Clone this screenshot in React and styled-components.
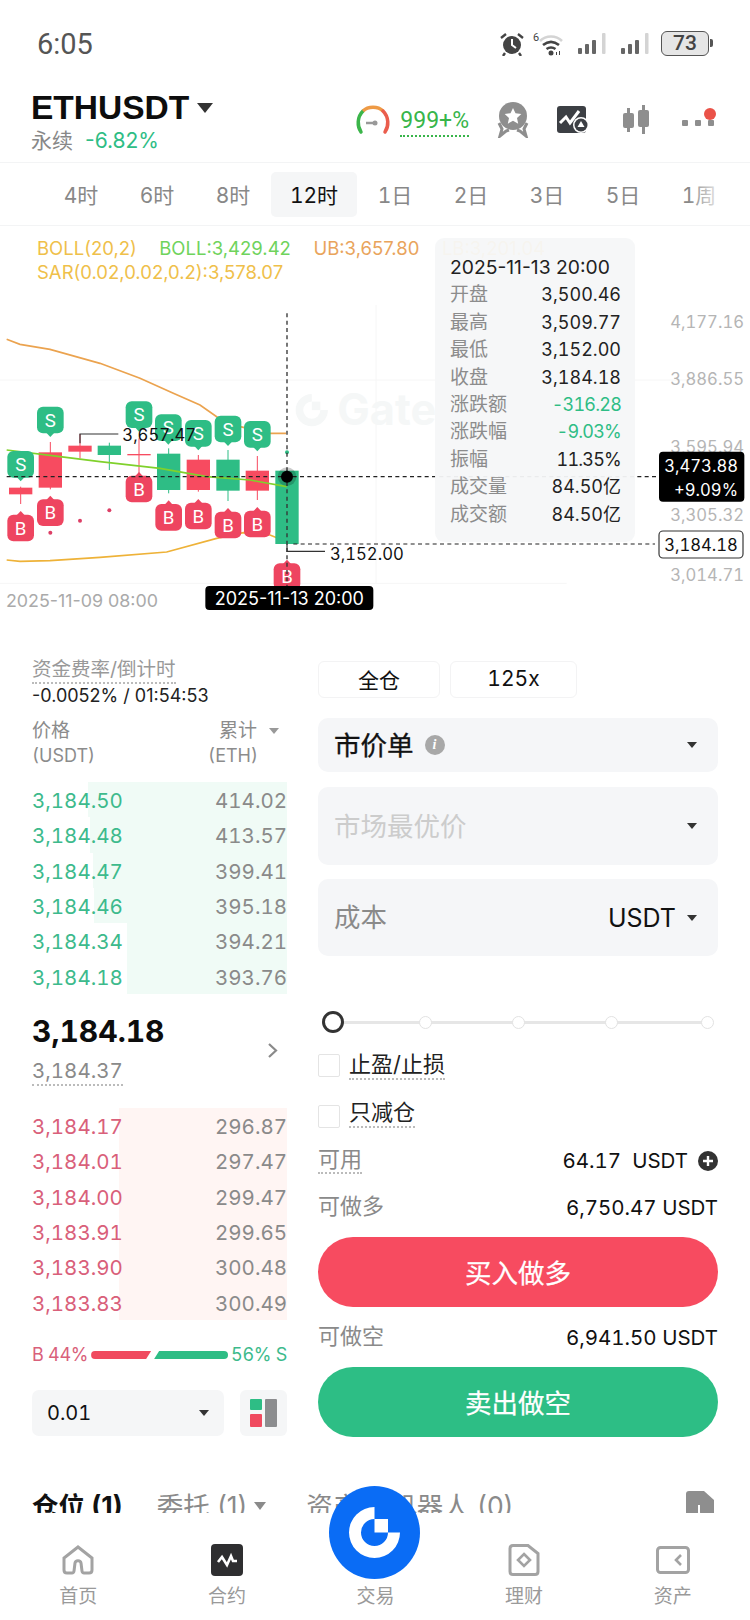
import React from "react";
import styled, { createGlobalStyle } from "styled-components";

const Global = createGlobalStyle`
  html, body { margin: 0; padding: 0; background: #fff; }
  body {
    font-family: Inter, "Noto Sans CJK SC", sans-serif;
    font-variant-numeric: tabular-nums;
    color: #111;
  }
  * { box-sizing: border-box; }
`;

const Page = styled.div`
  position: relative;
  width: 750px;
  height: 1620px;
  overflow: hidden;
  background: #fff;
`;

/* status bar */
const StatusBar = styled.div`
  height: 88px;
  padding: 26px 38px 0 37px;
  display: flex;
  justify-content: space-between;
  align-items: flex-start;
`;
const Clock = styled.div`
  font: 400 29px/36px Roboto, sans-serif;
  color: #555;
`;
const StatusIcons = styled.div`
  display: flex;
  align-items: center;
  margin-top: 5px;
`;
const Battery = styled.div`
  position: relative;
  width: 48px;
  height: 25px;
  margin: 0 3px 0 11px;
  border: 1.5px solid #555;
  border-radius: 6px;
  background: #e6e6e6;
  font: 500 21px/22px Roboto, sans-serif;
  color: #444;
  text-align: center;
  &::after {
    content: "";
    position: absolute;
    right: -5px;
    top: 7px;
    width: 3px;
    height: 8px;
    border-radius: 0 2px 2px 0;
    background: #555;
  }
`;

/* header */
const Header = styled.div`
  height: 75px;
  padding: 0 34px 0 31px;
  display: flex;
  justify-content: space-between;
  border-bottom: 1px solid #f3f4f5;
`;
const Symbol = styled.div`
  display: flex;
  flex-direction: column;
`;
const SymbolName = styled.div`
  display: flex;
  align-items: center;
  font: 700 33.5px/38px "Liberation Sans", sans-serif;
  color: #0d0d0d;
  margin-top: 1px;
`;
const Sub = styled.div`
  font-size: 21px;
  line-height: 28px;
  font-variant-numeric: normal;
  color: #888;
  span { color: #2ebd85; margin-left: 12px; }
`;
const Tools = styled.div`
  display: flex;
  align-items: center;
  height: 75px;
  padding-bottom: 12px;
`;
const Rate = styled.div`
  font: 400 23px/26px Roboto, sans-serif;
  color: #38b54a;
  margin: 6px 27px 0 10px;
  border-bottom: 2px dotted #38b54a;
  padding-bottom: 1px;
`;

/* interval tabs */
const Tabs = styled.div`
  position: relative;
  height: 63px;
  padding-left: 43px;
  display: flex;
  align-items: center;
  border-bottom: 1px solid #f3f4f5;
  &::after {
    content: "";
    position: absolute;
    right: 0;
    top: 0;
    bottom: 0;
    width: 62px;
    background: linear-gradient(to right, rgba(255,255,255,0), #fff 62%);
  }
`;
const Tab = styled.div`
  width: ${p => (p.$active ? 86 : 76)}px;
  height: 45px;
  flex: none;
  display: flex;
  align-items: center;
  justify-content: center;
  font-size: 21px;
  border-radius: 5px;
  color: ${p => (p.$active ? "#111" : "#888")};
  background: ${p => (p.$active ? "#f5f6f7" : "transparent")};
`;

/* chart */
const Chart = styled.div`
  position: relative;
  height: 399px;
`;
const ChartCanvas = styled.svg`
  display: block;
  width: 750px;
  height: 399px;
  font-family: Inter, sans-serif;
`;
const DateText = styled.text`
  font-variant-numeric: normal;
`;
const Legend = styled.div`
  position: absolute;
  left: 37px;
  top: 10px;
  font-size: 18.5px;
  line-height: 24px;
  font-variant-numeric: normal;
`;
const LegendRow = styled.div`
  display: flex;
  gap: 22.5px;
  white-space: nowrap;
`;
const LegendItem = styled.span`
  color: ${p => p.$color};
`;
const Tooltip = styled.div`
  position: absolute;
  left: 435px;
  top: 12px;
  width: 200px;
  height: 304px;
  padding: 16px 14px 0 15px;
  background: rgba(245, 247, 248, 0.95);
  border-radius: 9px;
  font-size: 18px;
`;
const TipDate = styled.div`
  height: 27.4px;
  line-height: 27.4px;
  font-size: 19.3px;
  font-variant-numeric: normal;
  white-space: nowrap;
  color: #222;
`;
const TipRow = styled.div`
  display: flex;
  justify-content: space-between;
  height: 27.4px;
  line-height: 27.4px;
  color: ${p => p.$color || "#222"};
`;
const TipValue = styled.span`
  letter-spacing: ${p => (p.$tight ? "-0.8px" : "0")};
`;
const TipLabel = styled.span`
  font-size: 19px;
  color: #8c8c8c;
`;

/* trade */
const Trade = styled.div`
  display: flex;
  padding: 0 32px;
  gap: 31px;
`;
const Left = styled.div`
  width: 255px;
  flex: none;
`;
const Right = styled.div`
  width: 400px;
  flex: none;
`;
const Dotted = styled.span`
  display: inline-block;
  border-bottom: 2px dotted ${p => p.$color || "#bbb"};
`;
const FundingLabel = styled(Dotted)`
  margin-top: 31px;
  font-size: 19.5px;
  line-height: 26px;
  color: #999;
`;
const FundingValue = styled.div`
  font-size: 18px;
  line-height: 24px;
  font-variant-numeric: normal;
  color: #222;
`;
const BookHead = styled.div`
  margin-top: 11px;
  display: flex;
  justify-content: space-between;
  font-size: 19px;
  line-height: 24px;
  color: #8c8c8c;
`;
const BookHeadCol = styled.div`
  display: flex;
  flex-direction: column;
  align-items: ${p => (p.$right ? "flex-end" : "flex-start")};
  padding-right: ${p => (p.$right ? 29 : 0)}px;
  small { font-size: 18px; line-height: 26px; }
`;
const HeadLabel = styled.div`
  display: flex;
  align-items: center;
  gap: 12px;
  margin-right: -21px;
`;
const Book = styled.div`
  margin-top: ${p => p.$top}px;
`;
const BookRow = styled.div`
  position: relative;
  height: 35.33px;
  padding-top: 2px;
  display: flex;
  justify-content: space-between;
  align-items: center;
  font-size: 20.5px;
`;
const Depth = styled.div`
  position: absolute;
  top: 0;
  bottom: 0;
  right: 0;
  background: ${p => (p.$side === "ask" ? "#f0fbf6" : "#fff5f3")};
`;
const Price = styled.span`
  position: relative;
  color: ${p => (p.$side === "ask" ? "#3dba8c" : "#d9607a")};
`;
const Qty = styled.span`
  position: relative;
  color: #8a8a8a;
`;
const Mid = styled.div`
  margin-top: 17px;
  display: flex;
  justify-content: space-between;
  align-items: flex-start;
`;
const MidPrice = styled.div`
  font-size: 30px;
  font-weight: 700;
  line-height: 40px;
  color: #0d0d0d;
`;
const MarkPrice = styled(Dotted)`
  margin-top: 7px;
  font-size: 20.5px;
  line-height: 26px;
  color: #8a8a8a;
`;
const Ratio = styled.div`
  margin-top: 23px;
  height: 24px;
  display: flex;
  align-items: center;
  justify-content: space-between;
  font-size: 18px;
`;
const RatioText = styled.span`
  color: ${p => p.$color};
  letter-spacing: -0.3px;
`;
const RatioBar = styled.div`
  height: 8px;
  flex: none;
  width: ${p => p.$w}px;
  background: ${p => p.$color};
  border-radius: ${p => (p.$left ? "4px 0 0 4px" : "0 4px 4px 0")};
  clip-path: ${p => p.$left
    ? "polygon(0 0, 100% 0, calc(100% - 5px) 100%, 0 100%)"
    : "polygon(5px 0, 100% 0, 100% 100%, 0 100%)"};
`;
const RatioBars = styled.div`
  display: flex;
  gap: 3px;
`;
const DepthRow = styled.div`
  margin-top: 23px;
  display: flex;
  gap: 16px;
`;
const DepthSelect = styled.div`
  width: 192px;
  height: 46px;
  background: #f5f6f7;
  border-radius: 7px;
  display: flex;
  align-items: center;
  justify-content: space-between;
  padding: 0 15px;
  font-size: 20px;
  color: #111;
`;
const LayoutBtn = styled.div`
  width: 47px;
  height: 46px;
  background: #f5f6f7;
  border-radius: 6px;
  display: flex;
  align-items: center;
  justify-content: center;
`;
const Caret = styled.span`
  display: inline-block;
  flex: none;
  width: 0;
  height: 0;
  margin-left: ${p => p.$ml || 0}px;
  border-left: ${p => p.$size || 5.5}px solid transparent;
  border-right: ${p => p.$size || 5.5}px solid transparent;
  border-top: ${p => (p.$size || 5.5) * 1.25}px solid ${p => p.$color || "#333"};
`;

const Modes = styled.div`
  margin-top: 36px;
  display: flex;
  gap: 10px;
`;
const Mode = styled.div`
  width: ${p => p.$w}px;
  height: 37px;
  border: 1px solid #f3f3f4;
  border-radius: 6px;
  display: flex;
  align-items: center;
  justify-content: center;
  padding-bottom: 2px;
  font-size: 21px;
  color: #111;
`;
const Field = styled.div`
  margin-top: ${p => p.$top}px;
  height: ${p => p.$h}px;
  padding: 0 21px 0 16px;
  background: #f5f6f8;
  border-radius: 10px;
  display: flex;
  align-items: center;
  justify-content: space-between;
`;
const FieldLabel = styled.div`
  display: flex;
  align-items: center;
  gap: 11px;
  padding-bottom: 4px;
  font-size: 26.5px;
  color: ${p => p.$color};
  -webkit-text-stroke: ${p => (p.$strong ? "0.35px" : "0")};
`;
const InfoDot = styled.span`
  width: 20px;
  height: 20px;
  margin-top: 4px;
  border-radius: 50%;
  background: #a8a8a8;
  color: #fff;
  font: italic 700 14px/20px "Liberation Serif", serif;
  text-align: center;
  -webkit-text-stroke: 0;
`;
const Unit = styled.div`
  display: flex;
  align-items: center;
  gap: 11px;
  font-size: 25px;
  color: #111;
`;
const Slider = styled.div`
  position: relative;
  margin-top: 54px;
  height: 24px;
  padding-left: 4px;
  display: flex;
  align-items: center;
  &::before {
    content: "";
    position: absolute;
    left: 14px;
    width: 375px;
    top: 10.5px;
    height: 3px;
    background: #e6e6e6;
  }
`;
const Knob = styled.span`
  position: relative;
  flex: none;
  margin-left: ${p => p.$ml || 0}px;
  width: ${p => (p.$on ? 22 : 13)}px;
  height: ${p => (p.$on ? 22 : 13)}px;
  border-radius: 50%;
  background: #fff;
  border: ${p => (p.$on ? "3.5px solid #333" : "1.5px solid #e2e2e2")};
`;
const Check = styled.div`
  margin-top: ${p => p.$top}px;
  display: flex;
  align-items: flex-start;
  gap: 9px;
`;
const Box = styled.span`
  width: 22px;
  height: 23px;
  margin-top: ${p => p.$mt}px;
  flex: none;
  border: 1.5px solid #e4e4e4;
  border-radius: 2px;
`;
const CheckText = styled(Dotted)`
  font-size: 22px;
  line-height: 27px;
  color: #222;
`;
const Line = styled.div`
  margin-top: ${p => p.$top}px;
  display: flex;
  justify-content: space-between;
  align-items: center;
  height: ${p => p.$h || 26}px;
`;
const LineLabel = styled.span`
  font-size: 22px;
  line-height: 26px;
  color: #8a8a8a;
`;
const LineDotted = styled(Dotted)`
  font-size: 22px;
  line-height: 26px;
  color: #8a8a8a;
`;
const LineValue = styled.span`
  display: flex;
  align-items: center;
  gap: 10px;
  font-size: 20.5px;
  color: #111;
  margin-top: 2px;
`;
const Action = styled.div`
  margin-top: 18px;
  height: 70px;
  border-radius: 35px;
  display: flex;
  align-items: center;
  justify-content: center;
  padding-bottom: 2px;
  background: ${p => p.$color};
  color: #fff;
  font-size: 26.5px;
  -webkit-text-stroke: 0.25px;
`;

/* position tabs */
const PosTabs = styled.div`
  margin-top: 33px;
  height: 43px;
  overflow: hidden;
  padding: 16px 36px 0 32px;
  display: flex;
  align-items: flex-start;
  font-size: 26.5px;
  font-variant-numeric: normal;
  line-height: 40px;
  color: #8a8a8a;
`;
const PosTab = styled.div`
  display: flex;
  align-items: center;
  gap: 7px;
  flex: none;
  margin-right: ${p => p.$gap}px;
  font-weight: ${p => (p.$active ? 700 : 400)};
  color: ${p => (p.$active ? "#111" : "#8a8a8a")};
`;
const PosAction = styled.div`
  margin: 5px 0 0 auto;
  line-height: 0;
`;

/* bottom nav */
const Nav = styled.div`
  height: 107px;
  padding: 31px 3px 0 4px;
  display: flex;
  background: #fff;
`;
const NavItem = styled.div`
  flex: 1;
  display: flex;
  flex-direction: column;
  align-items: center;
`;
const NavIcon = styled.div`
  height: 32px;
  display: flex;
  align-items: center;
  justify-content: center;
`;
const NavLabel = styled.div`
  margin-top: 8px;
  font-size: 19px;
  line-height: 26px;
  color: #9a9a9a;
`;
const Fab = styled.div`
  position: absolute;
  left: 329px;
  top: 1486px;
  width: 91px;
  height: 93px;
  border-radius: 50%;
  background: #0a6cf5;
  display: flex;
  align-items: center;
  justify-content: center;
`;

/* drawings */
const Alarm = () => (
  <svg width="26" height="24" viewBox="0 0 26 24">
    <circle cx="13" cy="13" r="9" fill="#444" />
    <path d="M13 7v6l4 3" stroke="#fff" strokeWidth="2" fill="none" />
    <path d="M2 6l5-4M24 6l-5-4M6 21l-2 3M20 21l2 3" stroke="#444" strokeWidth="2.4" />
  </svg>
);
const Wifi = () => (
  <svg width="34" height="24" viewBox="0 0 34 24" style={{ marginLeft: 8 }}>
    <text x="0" y="9" fontSize="11" fill="#444" fontFamily="Roboto">6</text>
    <path d="M7 9c6-6 16-6 22 0" stroke="#d4d4d4" strokeWidth="2.6" fill="none" />
    <path d="M10 13c5-4 11-4 16 0M13.500 17c3-2 6-2 9 0" stroke="#444" strokeWidth="2.6" fill="none" />
    <circle cx="18" cy="21" r="2.500" fill="#444" />
    <path d="M23 20h1v3h-1zM26 19h1v4h-1z" fill="#444" />
  </svg>
);
const Signal = ({ ml }) => (
  <svg width="29" height="24" viewBox="0 0 29 24" style={{ marginLeft: ml }}>
    <rect x="0" y="16" width="4" height="6" rx="1" fill="#666" />
    <rect x="7" y="12" width="4" height="10" rx="1" fill="#666" />
    <rect x="14" y="8" width="4" height="14" rx="1" fill="#666" />
    <rect x="24" y="1" width="3.500" height="21" rx="1" fill="#d4d4d4" />
  </svg>
);
const Gauge = () => (
  <svg width="34" height="30" viewBox="0 0 34 30">
    <path d="M5 27C1 21 1 12 7 6" stroke="#3bb54a" strokeWidth="3.500" fill="none" strokeLinecap="round" />
    <path d="M7 6C12 1 22 1 27 6" stroke="#ee9a45" strokeWidth="3.500" fill="none" />
    <path d="M27 6C33 12 33 21 29 27" stroke="#ea5d4d" strokeWidth="3.500" fill="none" strokeLinecap="round" />
    <path d="M10 18h10" stroke="#999" strokeWidth="2.500" />
    <circle cx="19" cy="18" r="2.500" fill="#999" />
  </svg>
);
const Medal = () => (
  <svg width="34" height="36" viewBox="0 0 34 36" style={{ marginRight: 27 }}>
    <circle cx="17" cy="14" r="14" fill="#8e8e8e" />
    <path d="M17 6l2.500 5.300 5.800.7-4.300 4 1.200 5.700-5.200-2.900-5.200 2.900 1.200-5.700-4.300-4 5.800-.7z" fill="#fff" />
    <path d="M3 21l3 6-2 7 6-5 3-1M31 21l-3 6 2 7-6-5-3-1" fill="none" stroke="#8e8e8e" strokeWidth="3" />
  </svg>
);
const TrendCard = () => (
  <svg width="32" height="27" viewBox="0 0 32 27" style={{ marginRight: 32 }}>
    <rect x="0" y="0" width="29" height="27" rx="3" fill="#3c3f44" />
    <path d="M3 17l6-6 4 6 9-12" stroke="#fff" strokeWidth="3" fill="none" />
    <circle cx="24" cy="19" r="8" fill="#fff" />
    <circle cx="24" cy="19" r="6.500" fill="#3c3f44" />
    <path d="M24 15l3.500 6h-7z" fill="#fff" />
  </svg>
);
const Candles = () => (
  <svg width="30" height="29" viewBox="0 0 30 29" style={{ marginRight: 31 }}>
    <path d="M7.500 3v24M22.500 0v29" stroke="#8e8e8e" strokeWidth="3" />
    <rect x="2" y="8" width="11" height="15" rx="2" fill="#8e8e8e" />
    <rect x="17" y="5" width="11" height="17" rx="2" fill="#8e8e8e" />
  </svg>
);
const More = () => (
  <svg width="34" height="24" viewBox="0 0 34 24">
    <rect x="0" y="12" width="6" height="6" rx="1" fill="#8e8e8e" />
    <rect x="13" y="12" width="6" height="6" rx="1" fill="#8e8e8e" />
    <rect x="26" y="12" width="6" height="6" rx="1" fill="#8e8e8e" />
    <circle cx="28" cy="6" r="6" fill="#ea5248" />
  </svg>
);
const Chevron = () => (
  <svg width="12" height="17" viewBox="0 0 12 17" style={{ marginTop: 31, marginRight: 8 }}>
    <path d="M2 2l7 6.500-7 6.500" stroke="#8a8a8a" strokeWidth="2.200" fill="none" />
  </svg>
);
const LayoutIcon = () => (
  <svg width="27" height="28" viewBox="0 0 27 28">
    <rect x="0" y="0" width="12" height="11" rx="1" fill="#2ebd85" />
    <rect x="0" y="15" width="12" height="13" rx="1" fill="#f04a5f" />
    <rect x="15" y="0" width="12" height="28" rx="1" fill="#8c8d8f" />
  </svg>
);
const Plus = () => (
  <svg width="20" height="20" viewBox="0 0 20 20">
    <circle cx="10" cy="10" r="10" fill="#333" />
    <path d="M5 10h10M10 5v10" stroke="#fff" strokeWidth="2.400" />
  </svg>
);
const DocIcon = () => (
  <svg width="28" height="30" viewBox="0 0 28 30">
    <path d="M3 0h15l10 9v21H0V3c0-2 1-3 3-3z" fill="#8e8e8e" />
    <path d="M13 14v7c0 3 2 4 5 4" stroke="#fff" strokeWidth="2" fill="none" />
  </svg>
);
const GateMark = ({ fill }) => (
  <svg width="54" height="54" viewBox="0 0 54 54">
    <path d="M26.500 1A25.500 25.500 0 1 0 52 26.500H40A13.500 13.500 0 1 1 26.500 13Z" fill={fill} />
    <rect x="26.500" y="13" width="13.500" height="13.500" fill={fill} />
  </svg>
);

const candles = [
  [62, 773, 793, 770, 822, "r"],
  [151, 667, 773, 636, 778, "r"],
  [240, 647, 665, 612, 685, "r"],
  [328, 647, 675, 638, 720, "g"],
  [417, 672, 676, 625, 730, "r"],
  [506, 671, 780, 655, 790, "g"],
  [595, 689, 780, 675, 785, "r"],
  [684, 689, 782, 660, 813, "g"],
  [772, 722, 782, 678, 810, "r"],
  [861, 722, 942, 722, 942, "g"],
];
const sells = [[62, 663], [151, 530], [417, 514], [505, 553], [595, 570], [684, 557], [772, 573]];
const buys = [[62, 854], [151, 808], [417, 737], [506, 822], [595, 818], [684, 845], [772, 842], [861, 1000]];
const axis = [["4,177.16", 275], ["3,886.55", 447], ["3,595.94", 650], ["3,305.32", 855], ["3,014.71", 1035]];
const RED = "#f74b60";
const GREEN = "#2ebd85";
const Badge = ({ x, y, s }) => {
  const c = s ? GREEN : "#ee4560";
  return (
    <g>
      <rect x={x - 40} y={y} width="80" height="80" rx="18" fill={c} />
      {s
        ? <path d={`M${x - 12} ${y + 78}L${x} ${y + 91}L${x + 12} ${y + 78}Z`} fill={c} />
        : <path d={`M${x - 12} ${y + 2}L${x} ${y - 11}L${x + 12} ${y + 2}Z`} fill={c} />}
      <text x={x} y={y + 60} textAnchor="middle" fontSize="56" fill="#fff" fontFamily="Roboto">{s ? "S" : "B"}</text>
    </g>
  );
};

const ChartDrawing = () => (
  <ChartCanvas viewBox="0 -12 2250 1197">
    <path d="M0 450H2160M1128 225V1060M0 1060H1700" stroke="#f6f6f6" strokeWidth="3" fill="none" />
    <g transform="translate(885 490) scale(1.9)" fill="#f5f7f7">
      <path d="M26.500 1A25.500 25.500 0 1 0 52 26.500H40A13.500 13.500 0 1 1 26.500 13Z" />
      <rect x="26.500" y="13" width="13.500" height="13.500" />
    </g>
    <text x="1012" y="585" fontSize="130" fontWeight="700" fill="#f5f7f7">Gate</text>

    <path d="M20 328L60 343 150 358 300 400 420 445 520 490 600 525 650 560 720 590 810 610H858" stroke="#eba34f" strokeWidth="5" fill="none" />
    <path d="M20 990L60 994 150 992 300 982 500 966 650 925 730 908 810 915 860 935" stroke="#eeb238" strokeWidth="5" fill="none" />

    {candles.map(([x, t, b, wt, wb, c]) => (
      <g key={x}>
        <rect x={x - 1.5} y={wt} width="3" height={wb - wt} fill={c === "r" ? RED : GREEN} />
        <rect x={x - 35} y={t} width="70" height={b - t} fill={c === "r" ? RED : GREEN} />
      </g>
    ))}
    <path d="M20 660L180 680 300 695 480 715 620 740 750 750 860 770" stroke="#80d12c" strokeWidth="5" fill="none" />

    {sells.map(([x, y]) => <Badge key={x} x={x} y={y} s />)}
    {buys.map(([x, y]) => <Badge key={x} x={x} y={y} />)}

    <circle cx="151" cy="908" r="6" fill="#dd3f66" />
    <circle cx="240" cy="872" r="6" fill="#dd3f66" />
    <circle cx="328" cy="841" r="6" fill="#dd3f66" />
    <circle cx="861" cy="667" r="6" fill={GREEN} />

    <path d="M861 250V1070" stroke="#333" strokeWidth="4" strokeDasharray="12 10" />
    <path d="M20 740H1980" stroke="#222" strokeWidth="3.500" strokeDasharray="12 10" />
    <path d="M880 942H1965" stroke="#222" strokeWidth="3.500" strokeDasharray="12 10" />
    <circle cx="861" cy="740" r="28" fill="#000" opacity=".2" />
    <circle cx="861" cy="740" r="18" fill="#000" />

    <path d="M240 640V612H355" stroke="#333" strokeWidth="3.500" fill="none" />
    <text x="367" y="632" fontSize="50" fill="#111">3,657.47</text>
    <path d="M861 942V964H975" stroke="#333" strokeWidth="3.500" fill="none" />
    <text x="990" y="990" fontSize="50" fill="#111">3,152.00</text>

    <DateText x="18" y="1132" fontSize="53.500" fill="#aaa">2025-11-09 08:00</DateText>
    <rect x="616" y="1068" width="504" height="72" rx="12" fill="#000" />
    <DateText x="868" y="1124" textAnchor="middle" fontSize="54" fill="#fff">2025-11-13 20:00</DateText>

    {axis.map(([t, y]) => (
      <text key={t} x="2232" y={y + 19} textAnchor="end" fontSize="50" fill="#b5b5b5">{t}</text>
    ))}
    <rect x="1977" y="665" width="256" height="150" rx="12" fill="#000" />
    <text x="2214" y="727" textAnchor="end" fontSize="50" fill="#fff">3,473.88</text>
    <text x="2214" y="799" textAnchor="end" fontSize="50" fill="#fff">+9.09%</text>
    <rect x="1977" y="903" width="252" height="81" rx="12" fill="#fff" stroke="#333" strokeWidth="3.500" />
    <text x="2103" y="963" textAnchor="middle" fontSize="50" fill="#111">3,184.18</text>
  </ChartCanvas>
);

const tips = [
  ["开盘", "3,500.46"], ["最高", "3,509.77"], ["最低", "3,152.00"], ["收盘", "3,184.18"],
  ["涨跌额", "-316.28", GREEN, true], ["涨跌幅", "-9.03%", GREEN, true], ["振幅", "11.35%", undefined, true],
  ["成交量", "84.50亿"], ["成交额", "84.50亿"],
];
const asks = [["3,184.50", "414.02", 199], ["3,184.48", "413.57", 197], ["3,184.47", "399.41", 194], ["3,184.46", "395.18", 193], ["3,184.34", "394.21", 160], ["3,184.18", "393.76", 160]];
const bids = [["3,184.17", "296.87", 168], ["3,184.01", "297.47", 168], ["3,184.00", "299.47", 168], ["3,183.91", "299.65", 168], ["3,183.90", "300.48", 168], ["3,183.83", "300.49", 168]];

const Rows = ({ data, side }) => data.map(([p, q, w]) => (
  <BookRow key={p}>
    <Depth $side={side} style={{ width: w }} />
    <Price $side={side}>{p}</Price>
    <Qty>{q}</Qty>
  </BookRow>
));

const Home = () => (
  <svg width="32" height="30" viewBox="0 0 32 30" fill="none" stroke="#a3a3a3" strokeWidth="3">
    <path d="M16 2L2 13v12c0 2 1 3 3 3h5c1 0 2-1 2-2l1-8c.5-3 5.500-3 6 0l1 8c0 1 1 2 2 2h5c2 0 3-1 3-3V13z" />
  </svg>
);
const Contract = () => (
  <svg width="32" height="32" viewBox="0 0 32 32">
    <rect width="32" height="32" rx="4" fill="#2e2e30" />
    <path d="M7 18l4-5 5 8 4-9 2 5h4" stroke="#fff" strokeWidth="2.600" fill="none" />
  </svg>
);
const Finance = () => (
  <svg width="32" height="32" viewBox="0 0 32 32" fill="none" stroke="#a3a3a3" strokeWidth="3">
    <path d="M5 1.500h15l10 8v18c0 2-1 3-3 3H5c-2 0-3-1-3-3v-23c0-2 1-3 3-3z" />
    <path d="M16 10l6 6-6 6-6-6z" strokeWidth="2.600" />
  </svg>
);
const Assets = () => (
  <svg width="34" height="28" viewBox="0 0 34 28" fill="none" stroke="#a3a3a3" strokeWidth="3">
    <rect x="1.500" y="1.500" width="31" height="25" rx="3" />
    <path d="M25 9l-5 5 5 5" strokeWidth="2.600" />
  </svg>
);

export default function App() {
  return (
    <Page>
      <Global />
      <StatusBar>
        <Clock>6:05</Clock>
        <StatusIcons>
          <Alarm />
          <Wifi />
          <Signal ml={11} />
          <Signal ml={14} />
          <Battery>73</Battery>
        </StatusIcons>
      </StatusBar>

      <Header>
        <Symbol>
          <SymbolName>ETHUSDT<Caret $size={8} $ml={8} /></SymbolName>
          <Sub>永续<span>-6.82%</span></Sub>
        </Symbol>
        <Tools>
          <Gauge />
          <Rate>999+%</Rate>
          <Medal />
          <TrendCard />
          <Candles />
          <More />
        </Tools>
      </Header>

      <Tabs>
        {["4时", "6时", "8时", "12时", "1日", "2日", "3日", "5日", "1周"].map(t => (
          <Tab key={t} $active={t === "12时"}>{t}</Tab>
        ))}
      </Tabs>

      <Chart>
        <ChartDrawing />
        <Legend>
          <LegendRow>
            <LegendItem $color="#efc04a">BOLL(20,2)</LegendItem>
            <LegendItem $color="#6fd35c">BOLL:3,429.42</LegendItem>
            <LegendItem $color="#e9a45c">UB:3,657.80</LegendItem>
            <LegendItem $color="#efc04a">LB:3,201.04</LegendItem>
          </LegendRow>
          <LegendRow><LegendItem $color="#efc04a">SAR(0.02,0.02,0.2):3,578.07</LegendItem></LegendRow>
        </Legend>
        <Tooltip>
          <TipDate>2025-11-13 20:00</TipDate>
          {tips.map(([l, v, c, tight]) => (
            <TipRow key={l} $color={c}><TipLabel>{l}</TipLabel><TipValue $tight={tight}>{v}</TipValue></TipRow>
          ))}
        </Tooltip>
      </Chart>

      <Trade>
        <Left>
          <FundingLabel>资金费率/倒计时</FundingLabel>
          <FundingValue>-0.0052% / 01:54:53</FundingValue>
          <BookHead>
            <BookHeadCol>价格<small>(USDT)</small></BookHeadCol>
            <BookHeadCol $right>
              <HeadLabel>累计<Caret $size={5} $color="#999" /></HeadLabel>
              <small>(ETH)</small>
            </BookHeadCol>
          </BookHead>
          <Book $top={13}><Rows data={asks} side="ask" /></Book>
          <Mid>
            <div>
              <MidPrice>3,184.18</MidPrice>
              <MarkPrice>3,184.37</MarkPrice>
            </div>
            <Chevron />
          </Mid>
          <Book $top={22}><Rows data={bids} side="bid" /></Book>
          <Ratio>
            <RatioText $color="#d9607a">B 44%</RatioText>
            <RatioBars>
              <RatioBar $left $w={60} $color="#f04a5f" />
              <RatioBar $w={74} $color={GREEN} />
            </RatioBars>
            <RatioText $color="#3dba8c">56% S</RatioText>
          </Ratio>
          <DepthRow>
            <DepthSelect>0.01 <Caret $size={5.5} /></DepthSelect>
            <LayoutBtn><LayoutIcon /></LayoutBtn>
          </DepthRow>
        </Left>

        <Right>
          <Modes>
            <Mode $w={122}>全仓</Mode>
            <Mode $w={127}>125x</Mode>
          </Modes>
          <Field $top={20} $h={54}>
            <FieldLabel $color="#111" $strong>市价单 <InfoDot>i</InfoDot></FieldLabel>
            <Caret />
          </Field>
          <Field $top={15} $h={78}>
            <FieldLabel $color="#ccc">市场最优价</FieldLabel>
            <Caret />
          </Field>
          <Field $top={14} $h={77}>
            <FieldLabel $color="#8a8a8a">成本</FieldLabel>
            <Unit>USDT <Caret /></Unit>
          </Field>
          <Slider>
            <Knob $on />
            <Knob $ml={74.5} /><Knob $ml={80} /><Knob $ml={80} /><Knob $ml={83} />
          </Slider>
          <Check $top={17}>
            <Box $mt={3} />
            <CheckText>止盈/止损</CheckText>
          </Check>
          <Check $top={19}>
            <Box $mt={6} />
            <CheckText>只减仓</CheckText>
          </Check>
          <Line $top={17} $h={29}>
            <LineDotted>可用</LineDotted>
            <LineValue>64.17&nbsp;&nbsp;USDT <Plus /></LineValue>
          </Line>
          <Line $top={19}>
            <LineLabel>可做多</LineLabel>
            <LineValue>6,750.47 USDT</LineValue>
          </Line>
          <Action $color={RED}>买入做多</Action>
          <Line $top={16}>
            <LineLabel>可做空</LineLabel>
            <LineValue>6,941.50 USDT</LineValue>
          </Line>
          <Action $color="#2dbe85">卖出做空</Action>
        </Right>
      </Trade>

      <PosTabs>
        <PosTab $active $gap={34}>仓位 (1)</PosTab>
        <PosTab $gap={40}>委托 (1) <Caret $size={6.5} $color="#8a8a8a" /></PosTab>
        <PosTab $gap={31}>资产</PosTab>
        <PosTab $gap={0}>机器人 (0)</PosTab>
        <PosAction><DocIcon /></PosAction>
      </PosTabs>

      <Nav>
        <NavItem><NavIcon><Home /></NavIcon><NavLabel>首页</NavLabel></NavItem>
        <NavItem><NavIcon><Contract /></NavIcon><NavLabel>合约</NavLabel></NavItem>
        <NavItem><NavIcon /><NavLabel>交易</NavLabel></NavItem>
        <NavItem><NavIcon><Finance /></NavIcon><NavLabel>理财</NavLabel></NavItem>
        <NavItem><NavIcon><Assets /></NavIcon><NavLabel>资产</NavLabel></NavItem>
      </Nav>
      <Fab><GateMark fill="#fff" /></Fab>
    </Page>
  );
}
